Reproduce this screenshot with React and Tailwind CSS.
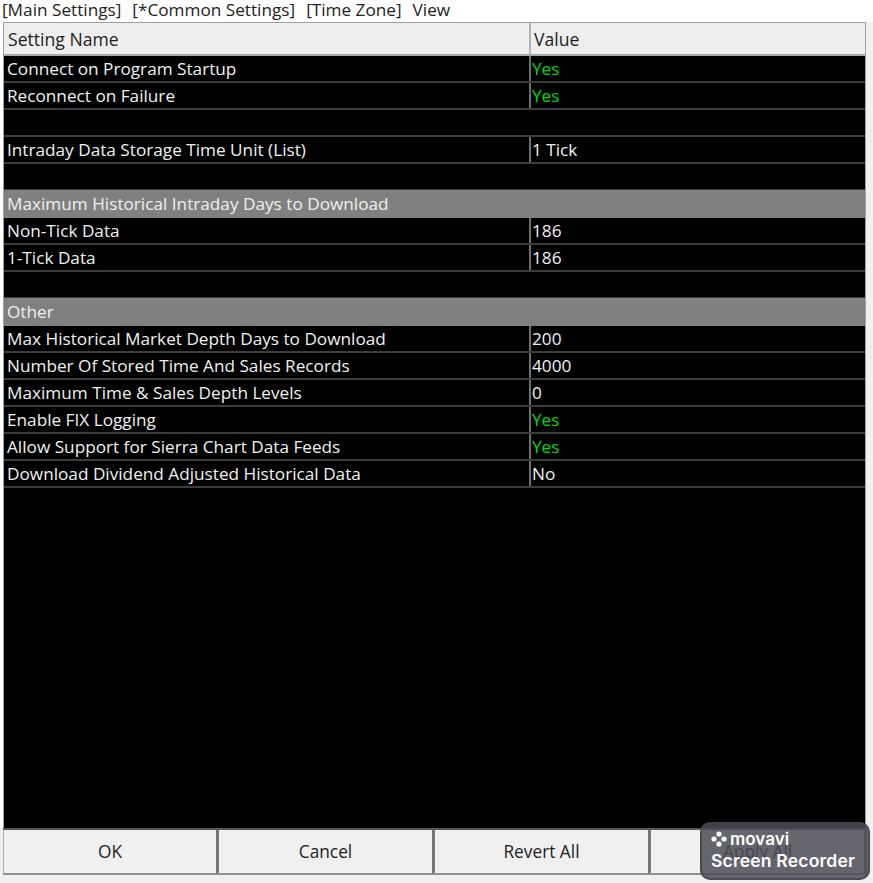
const YES = "text-[#00dc00]";

const ROWS = [
  { name: "Connect on Program Startup", value: "Yes", color: YES },
  { name: "Reconnect on Failure", value: "Yes", color: YES },
  { blank: true },
  { name: "Intraday Data Storage Time Unit (List)", value: "1 Tick" },
  { blank: true },
  { group: "Maximum Historical Intraday Days to Download" },
  { name: "Non-Tick Data", value: "186" },
  { name: "1-Tick Data", value: "186" },
  { blank: true },
  { group: "Other" },
  { name: "Max Historical Market Depth Days to Download", value: "200" },
  { name: "Number Of Stored Time And Sales Records", value: "4000" },
  { name: "Maximum Time & Sales Depth Levels", value: "0" },
  { name: "Enable FIX Logging", value: "Yes", color: YES },
  { name: "Allow Support for Sierra Chart Data Feeds", value: "Yes", color: YES },
  { name: "Download Dividend Adjusted Historical Data", value: "No" },
];

function Row({ row }) {
  if (row.blank) {
    return <div className="h-[27px] border-b-2 border-[#3c3c3c]" />;
  }
  if (row.group) {
    return (
      <div className="-mt-px h-[28px] bg-[#808080] pl-[3px] leading-[28px] text-[#f0f0f0]">
        {row.group}
      </div>
    );
  }
  return (
    <div className="flex h-[27px] border-b-2 border-[#3c3c3c] leading-[25px]">
      <div className="w-[527px] shrink-0 truncate border-r-2 border-[#6e6e6e] pl-[3px] text-[#f0f0f0]">
        {row.name}
      </div>
      <div className={`pl-[1px] ${row.color || "text-[#f0f0f0]"}`}>{row.value}</div>
    </div>
  );
}

function Movavi() {
  return (
    <div className="absolute left-[700px] top-[822px] h-[58px] w-[170px] rounded-[10px] border-2 border-[#44444c]/80 bg-[#4c4c56]/85 pl-[9px] pt-[6px] font-['Inter',sans-serif] text-white">
      <div className="flex h-[18px] items-center gap-[3px]">
        <svg width="16" height="16" viewBox="0 0 16 16" fill="#fff">
          <circle cx="8" cy="3" r="2.6" />
          <circle cx="3" cy="8" r="2.6" />
          <circle cx="13" cy="8" r="2.6" />
          <circle cx="8" cy="13" r="2.6" />
        </svg>
        <span className="text-[17px] font-semibold leading-none">movavi</span>
      </div>
      <div className="mt-[3px] whitespace-nowrap text-[17.5px] font-semibold leading-[20px] tracking-[0.2px]">
        Screen Recorder
      </div>
    </div>
  );
}

export default function App() {
  return (
    <div className="relative h-[883px] w-[873px] overflow-hidden bg-[#f0f0f0] font-['Open_Sans','Noto_Sans',sans-serif] text-[17.2px]">
      {/* Menu */}
      <div className="flex h-[22px] gap-[11px] bg-white pl-[2px] text-[17.2px] leading-[20px] text-[#222]">
        <span>[Main Settings]</span>
        <span>[*Common Settings]</span>
        <span>[Time Zone]</span>
        <span>View</span>
      </div>

      <div className="flex h-[806px] w-[866px] bg-white pl-[3px]">
        <div className="flex w-[863px] flex-col border-x border-t border-[#a0a0a0] bg-black">
          {/* Header */}
          <div className="flex h-[33px] shrink-0 border-b-2 border-[#a8a8a8] bg-[#eeeeee] text-[17.6px] leading-[33px] text-[#222]">
            <div className="w-[527px] border-r-2 border-[#b4b4b4] pl-[4px]">Setting Name</div>
            <div className="pl-[3px]">Value</div>
          </div>
          {ROWS.map((row, i) => (
            <Row key={i} row={row} />
          ))}
        </div>
      </div>

      {/* Buttons */}
      <div className="ml-[3px] grid h-[47px] w-[864px] grid-cols-4 border-t-2 border-[#555] border-b-2 border-b-[#909090] text-[17.3px] text-[#222]">
        {["OK", "Cancel", "Revert All", "Apply All"].map((label, i) => (
          <button
            key={label}
            className={`border-r-[3px] border-[#777] bg-[#f0f0f0] ${i === 0 ? "border-l border-l-[#b0b0b0]" : ""}`}
          >
            {label}
          </button>
        ))}
      </div>

      <Movavi />
    </div>
  );
}
